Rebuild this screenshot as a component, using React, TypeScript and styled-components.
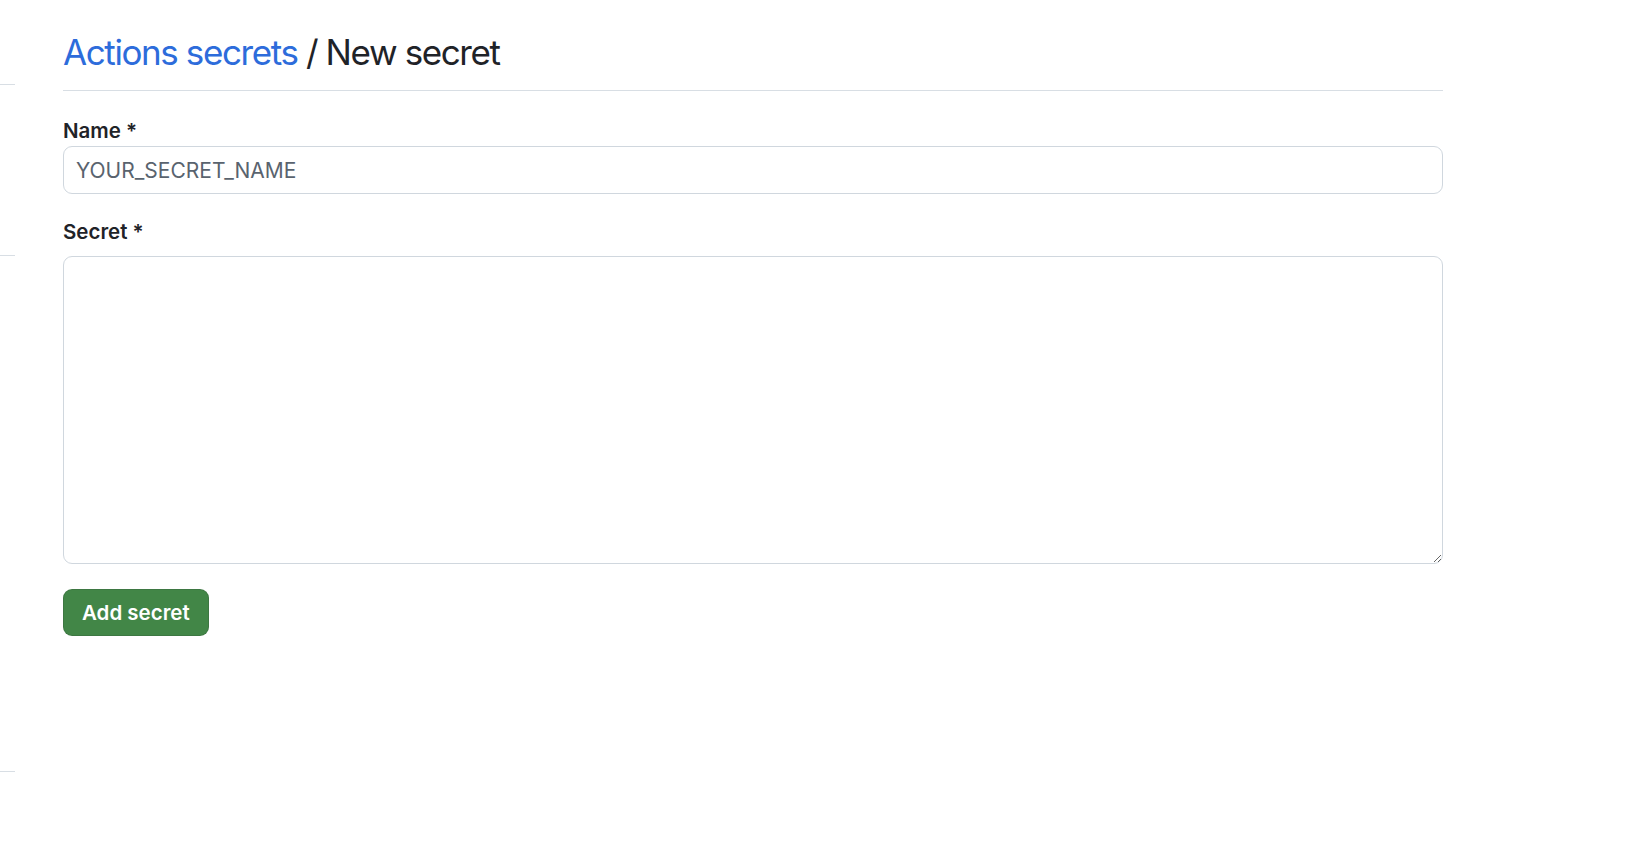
import * as React from 'react';
import styled, { createGlobalStyle } from 'styled-components';

const GlobalStyle = createGlobalStyle`
  html, body { margin: 0; padding: 0; background: #ffffff; }
  body {
    font-family: Inter, "Noto Sans", "Liberation Sans", sans-serif;
    color: #1f2328;
  }
  * { box-sizing: border-box; }
`

const Page = styled.div`
  display: flex;
  align-items: flex-start;
  min-height: 842px;
`

const SideNav = styled.nav`
  width: 15px;
  flex-shrink: 0;
  display: flex;
  flex-direction: column;
`

const NavGroup = styled.div<{ $h: number }>`
  height: ${p => p.$h}px;
  border-bottom: 1px solid #d8dee4;
`

const Main = styled.main`
  width: 1380px;
  margin-left: 48px;
  padding-top: 25px;
`

const Subhead = styled.div`
  padding-bottom: 11px;
  border-bottom: 1px solid #d8dee4;
  margin-bottom: 26px;
  > h2 {
    margin: 0;
    font-size: 35px;
    letter-spacing: -1.4px;
    line-height: 54px;
    font-weight: 400;
    > a { color: #2d6cdb; text-decoration: none; }
  }
`

const Field = styled.div`
  margin-bottom: 24px;
  > label {
    display: block;
    font-size: 20.5px;
    font-weight: 600;
    line-height: 28px;
    margin-bottom: 1px;
  }
`

const TextInput = styled.input`
  display: block;
  width: 100%;
  height: 48px;
  padding: 0 12px;
  font-family: inherit;
  font-size: 21px;
  color: #1f2328;
  border: 1px solid #d0d7de;
  border-radius: 9px;
  background: #ffffff;
  outline: none;
  &::placeholder { color: #59636e; }
`

const TextArea = styled.textarea`
  display: block;
  width: 100%;
  height: 308px;
  margin-top: 10px;
  padding: 12px;
  font-family: inherit;
  font-size: 21px;
  border: 1px solid #d0d7de;
  border-radius: 9px;
  background: #ffffff;
  outline: none;
`

const PrimaryButton = styled.button`
  height: 47px;
  margin-top: 1px;
  padding: 0 18px;
  font-family: inherit;
  font-size: 20.5px;
  font-weight: 600;
  color: #ffffff;
  background: #428647;
  border: 1px solid rgba(31, 35, 40, 0.15);
  border-radius: 9px;
  cursor: pointer;
`

export default function App() {
  return (
    <Page>
      <GlobalStyle />
      <SideNav>
        <NavGroup $h={85} />
        <NavGroup $h={171} />
        <NavGroup $h={516} />
      </SideNav>
      <Main>
        <Subhead>
          <h2>
            <a href="#">Actions secrets</a> / New secret
          </h2>
        </Subhead>
        <form>
          <Field>
            <label htmlFor="secret_name">Name *</label>
            <TextInput id="secret_name" type="text" placeholder="YOUR_SECRET_NAME" />
          </Field>
          <Field>
            <label htmlFor="secret_value">Secret *</label>
            <TextArea id="secret_value" />
          </Field>
          <PrimaryButton type="submit">Add secret</PrimaryButton>
        </form>
      </Main>
    </Page>
  );
}
